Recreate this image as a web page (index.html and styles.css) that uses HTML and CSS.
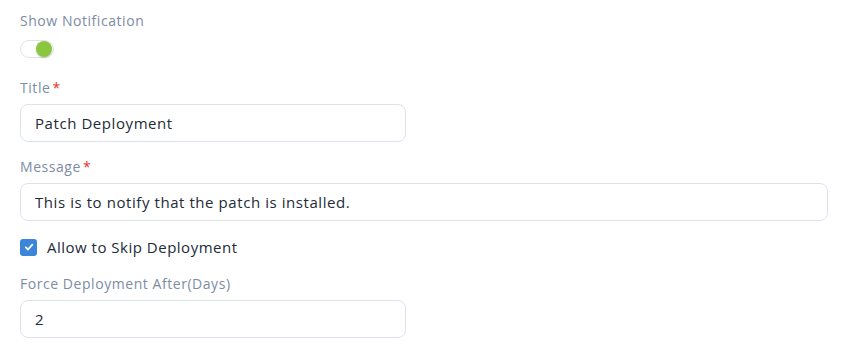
FILE: index.html
```html
<!doctype html>
<html lang="en">
    <head>
        <meta charset="utf-8">
        <title>Notification Settings</title>
        <link rel="stylesheet" href="styles.css">
    </head>
    <body>
        <form class="form">
            <div class="field">
                <label class="label">Show Notification</label>
                <span class="toggle on"><span class="knob"></span></span>
            </div>
            <div class="field">
                <label class="label" for="title">Title<span class="req">*</span></label>
                <input id="title" class="input half" type="text" value="Patch Deployment">
            </div>
            <div class="field">
                <label class="label" for="message">Message<span class="req">*</span></label>
                <input id="message" class="input" type="text" value="This is to notify that the patch is installed.">
            </div>
            <label class="check">
                <span class="box">
                    <svg width="12" height="12" viewBox="0 0 12 12"><path d="M2.8 6.3l2.2 2.2 4.3-4.8" fill="none" stroke="#fff" stroke-width="1.8" stroke-linecap="round" stroke-linejoin="round"/></svg>
                </span>
                Allow to Skip Deployment
            </label>
            <div class="field">
                <label class="label" for="days">Force Deployment After(Days)</label>
                <input id="days" class="input half" type="text" value="2">
            </div>
        </form>
    </body>
</html>
```

FILE: styles.css
```css
body {
    margin: 0;
    font-family: "Open Sans", sans-serif;
    background: #fff;
    color: #222b38;
}
.form {
    padding: 11px 19px 0 20px;
    display: flex;
    flex-direction: column;
}
.field {
    display: flex;
    flex-direction: column;
    align-items: flex-start;
    margin-bottom: 15px;
}
.label {
    font-size: 14px;
    letter-spacing: 0.55px;
    color: #7d8ca4;
    line-height: 20px;
    margin-bottom: 6px;
}
.req {
    color: #e5322d;
    margin-left: 2px;
}
.toggle {
    width: 32px;
    height: 16px;
    margin: 3px 0 5px;
    border: 1px solid #dfe4ec;
    border-radius: 10px;
    position: relative;
}
.toggle .knob {
    position: absolute;
    top: 0;
    right: 1px;
    width: 16px;
    height: 16px;
    border-radius: 50%;
    background: #8cc63f;
    box-shadow: 0 1px 2px rgba(0,0,0,0.18);
}
.input {
    box-sizing: border-box;
    width: 100%;
    height: 38px;
    border: 1px solid #dde3ec;
    border-radius: 8px;
    padding: 0 14px;
    font-family: inherit;
    font-size: 15px;
    letter-spacing: 0.57px;
    color: #222b38;
    outline: none;
}
.input.half {
    width: 386px;
}
.check {
    display: flex;
    align-items: center;
    gap: 10px;
    height: 20px;
    font-size: 15px;
    letter-spacing: 0.5px;
    margin: 1px 0 17px;
}
.box {
    width: 17px;
    height: 17px;
    border-radius: 3px;
    background: #3b86d8;
    display: flex;
    align-items: center;
    justify-content: center;
}
```
